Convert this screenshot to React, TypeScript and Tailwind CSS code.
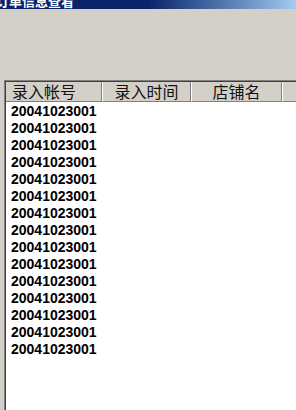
const rows = Array.from({ length: 15 }, () => "20041023001");

export default function App() {
  return (
    <div className="flex h-[410px] w-[296px] flex-col overflow-hidden bg-[#d4d0c8] font-['Liberation_Sans','Noto_Sans_CJK_SC',sans-serif]">
      {/* title bar, cut off at the top */}
      <div className="h-[9px] shrink-0 overflow-hidden bg-gradient-to-r from-[#0a246a] via-[#0a246a] to-[#a6caf0]">
        <div className="-mt-[6px] -ml-[4px] whitespace-nowrap text-[13px] leading-[15px] font-bold text-white">
          订单信息查看
        </div>
      </div>

      <div className="h-[71px] shrink-0" />

      {/* list view */}
      <div className="ml-[4px] flex flex-1 flex-col border-t border-l border-t-[#808080] border-l-[#808080]">
        <div className="flex flex-1 flex-col border-t border-l border-t-[#404040] border-l-[#404040] bg-white">
          <div className="flex h-[20px] shrink-0 bg-[#d4d0c8] text-[16px] leading-[18px] text-[#111] font-['Noto_Sans_CJK_SC',sans-serif]">
            <div className="w-[96px] border-r border-b border-r-[#808080] border-b-[#808080] pl-[6px]">录入帐号</div>
            <div className="w-[89px] border-r border-b border-l border-r-[#808080] border-b-[#808080] border-l-white text-center">录入时间</div>
            <div className="w-[91px] border-r border-b border-l border-r-[#808080] border-b-[#808080] border-l-white text-center">店铺名</div>
            <div className="flex-1 border-b border-l border-b-[#808080] border-l-white" />
          </div>
          <div className="flex flex-col pt-[1px] pl-[5px]">
            {rows.map((r, i) => (
              <div key={i} className="h-[17px] text-[14px] leading-[17px] font-bold text-black">
                {r}
              </div>
            ))}
          </div>
        </div>
      </div>
    </div>
  );
}
